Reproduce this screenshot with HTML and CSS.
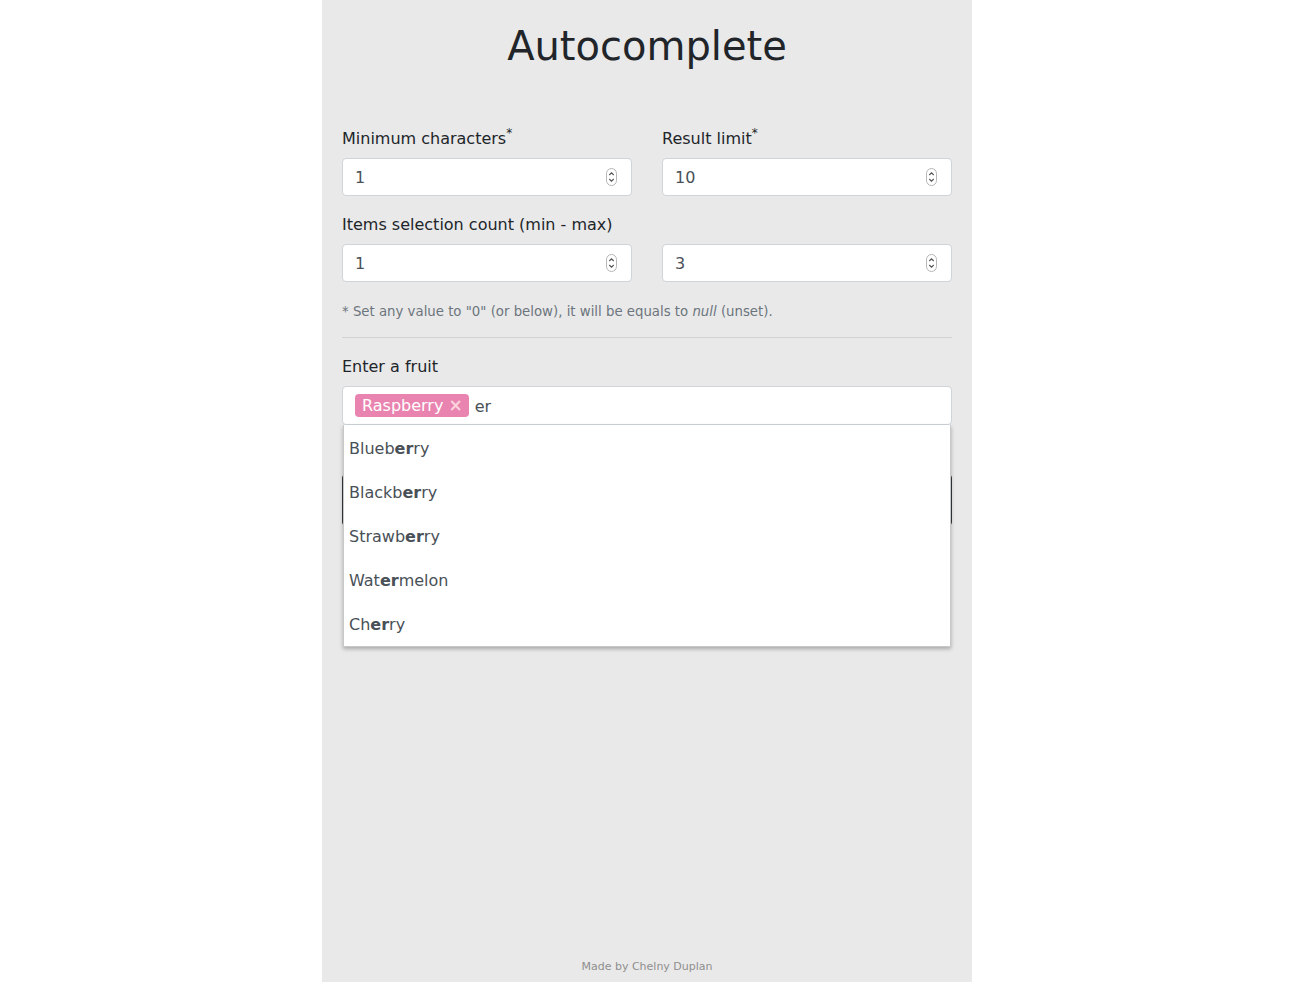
FILE: index.html
```html
<!DOCTYPE html>
<html lang="en">
<head>
<meta charset="utf-8">
<title>Autocomplete</title>
<link rel="stylesheet" href="styles.css">
</head>
<body>
<div class="page">
  <main class="content">
    <h1 class="title">Autocomplete</h1>
    <div class="grid">
      <div class="field">
        <label class="label">Minimum characters<sup>*</sup></label>
        <div class="input num"><span>1</span>
          <svg class="spin" width="11" height="18" viewBox="0 0 11 18"><rect x="0.5" y="0.5" width="10" height="17" rx="5" fill="#fff" stroke="#b5b5b5"/><path d="M3.3 7 L5.5 4.8 L7.7 7" fill="none" stroke="#555" stroke-width="1.1"/><path d="M3.3 11 L5.5 13.2 L7.7 11" fill="none" stroke="#555" stroke-width="1.1"/></svg>
        </div>
      </div>
      <div class="field">
        <label class="label">Result limit<sup>*</sup></label>
        <div class="input num"><span>10</span>
          <svg class="spin" width="11" height="18" viewBox="0 0 11 18"><rect x="0.5" y="0.5" width="10" height="17" rx="5" fill="#fff" stroke="#b5b5b5"/><path d="M3.3 7 L5.5 4.8 L7.7 7" fill="none" stroke="#555" stroke-width="1.1"/><path d="M3.3 11 L5.5 13.2 L7.7 11" fill="none" stroke="#555" stroke-width="1.1"/></svg>
        </div>
      </div>
    </div>
    <label class="label label-wide">Items selection count (min - max)</label>
    <div class="grid">
      <div class="input num"><span>1</span>
        <svg class="spin" width="11" height="18" viewBox="0 0 11 18"><rect x="0.5" y="0.5" width="10" height="17" rx="5" fill="#fff" stroke="#b5b5b5"/><path d="M3.3 7 L5.5 4.8 L7.7 7" fill="none" stroke="#555" stroke-width="1.1"/><path d="M3.3 11 L5.5 13.2 L7.7 11" fill="none" stroke="#555" stroke-width="1.1"/></svg>
      </div>
      <div class="input num"><span>3</span>
        <svg class="spin" width="11" height="18" viewBox="0 0 11 18"><rect x="0.5" y="0.5" width="10" height="17" rx="5" fill="#fff" stroke="#b5b5b5"/><path d="M3.3 7 L5.5 4.8 L7.7 7" fill="none" stroke="#555" stroke-width="1.1"/><path d="M3.3 11 L5.5 13.2 L7.7 11" fill="none" stroke="#555" stroke-width="1.1"/></svg>
      </div>
    </div>
    <p class="note">* Set any value to "0" (or below), it will be equals to <em>null</em> (unset).</p>
    <hr class="divider">
    <label class="label">Enter a fruit</label>
    <div class="auto">
      <div class="input tags">
        <span class="tag">Raspberry <span class="tag-x">×</span></span>
        <span class="typed">er</span>
      </div>
      <ul class="dropdown">
        <li>Blueb<b>er</b>ry</li>
        <li>Blackb<b>er</b>ry</li>
        <li>Strawb<b>er</b>ry</li>
        <li>Wat<b>er</b>melon</li>
        <li>Ch<b>er</b>ry</li>
      </ul>
    </div>
    <button class="submit">Submit</button>
  </main>
  <footer class="footer">Made by Chelny Duplan</footer>
</div>
</body>
</html>
```

FILE: styles.css
```css
html, body {
  margin: 0;
  padding: 0;
  background: #ffffff;
}
body {
  font-family: "DejaVu Sans", Verdana, sans-serif;
  color: #212529;
  font-size: 16px;
  line-height: 24px;
}
.page {
  width: 650px;
  margin: 0 auto;
  background: #e9e9e9;
  min-height: 100vh;
  box-sizing: border-box;
  padding: 0 20px;
  display: flex;
  flex-direction: column;
}
.content {
  flex: 1;
}
.title {
  margin: 22px 0 56px;
  font-size: 40px;
  line-height: 48px;
  font-weight: 400;
  text-align: center;
  color: #212529;
}
.grid {
  display: grid;
  grid-template-columns: 1fr 1fr;
  column-gap: 30px;
}
.field {
  display: flex;
  flex-direction: column;
}
.label {
  display: block;
  padding-top: 1px;
  margin-bottom: 7px;
}
.label sup {
  font-size: 12px;
  line-height: 0;
  vertical-align: 7px;
}
.grid + .label-wide {
  margin-top: 16px;
}
.input {
  box-sizing: border-box;
  height: 38px;
  background: #fff;
  border: 1px solid #ced4da;
  border-radius: 4px;
  padding: 7px 12px 5px;
  color: #495057;
  display: flex;
  align-items: center;
}
.num span {
  flex: 1;
}
.spin {
  display: block;
  margin-right: 2px;
  margin-top: -2px;
}
.note {
  margin: 20px 0 0;
  font-size: 13.3px;
  line-height: 20px;
  color: #6c757d;
}
.divider {
  border: 0;
  border-top: 1px solid #d2d2d2;
  margin: 15px 0 16px;
  height: 0;
}
.auto {
  position: relative;
}
.tags {
  height: 39px;
  padding: 7px 12px 5px;
  gap: 6px;
}
.tag {
  background: #e984b0;
  color: #fff;
  border-radius: 4px;
  height: 23px;
  line-height: 23px;
  padding: 0 6px 0 7px;
  margin-top: -2px;
  display: inline-flex;
  align-items: center;
}
.tag-x {
  color: #fbd3dc;
  font-weight: 700;
  margin-left: 5px;
  font-size: 17px;
}
.typed {
  color: #495057;
}
.dropdown {
  position: absolute;
  left: 1px;
  right: 1px;
  top: 39px;
  margin: 0;
  padding: 0;
  list-style: none;
  background: #fff;
  border: 1px solid #c8c8c8;
  border-top: 0;
  box-shadow: 0 2px 4px rgba(0, 0, 0, 0.28);
  z-index: 2;
}
.dropdown li {
  height: 44px;
  line-height: 48px;
  padding: 0 5px;
  color: #495057;
}
.dropdown li:last-child {
  height: 45px;
}
.dropdown b {
  font-weight: 700;
}
.submit {
  display: block;
  width: 100%;
  margin-top: 49px;
  height: 52px;
  background: #343a40;
  border: 1px solid #343a40;
  color: #fff;
  border-radius: 4px;
  font-family: inherit;
  font-size: 16px;
}
.footer {
  text-align: center;
  font-size: 11px;
  line-height: 16px;
  color: #8f8f8f;
  padding: 0 0 7px;
}
```
